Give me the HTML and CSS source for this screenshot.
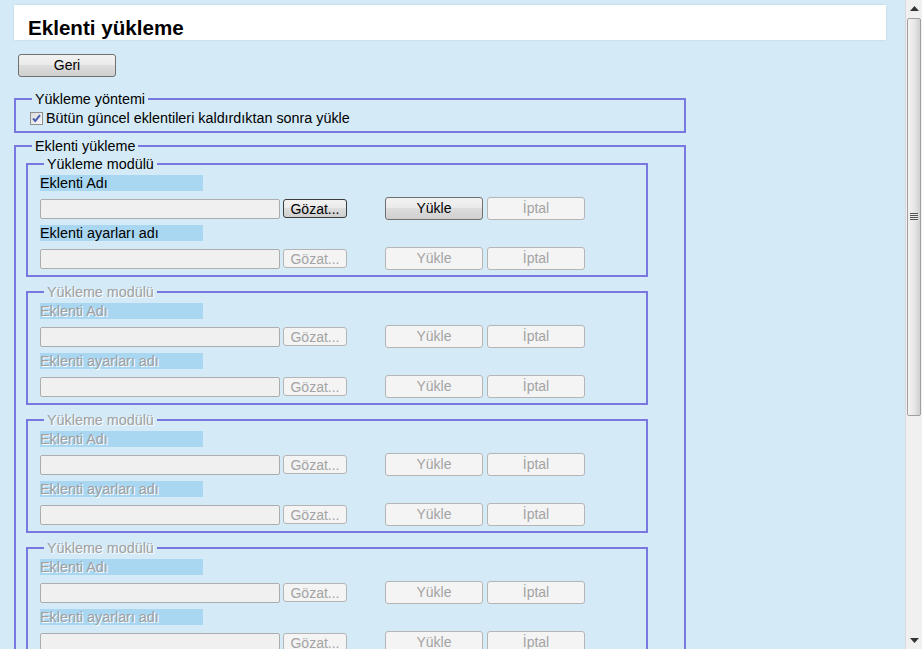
FILE: index.html
```html
<!DOCTYPE html>
<html lang="tr">
<head>
<meta charset="utf-8">
<title>Eklenti yükleme</title>
<link rel="stylesheet" href="styles.css">
</head>
<body>
<div class="window">
  <main class="page">
    <header class="titlebox"><h1 class="title">Eklenti yükleme</h1></header>
    <div class="backrow"><button class="btn btn-wide">Geri</button></div>

    <fieldset class="group">
      <legend class="glegend">Yükleme yöntemi</legend>
      <div class="checkrow">
        <span class="checkbox"><svg width="11" height="11" viewBox="0 0 11 11"><path d="M2 5.5 L4.3 8 L9 2.2" fill="none" stroke="#4a5fae" stroke-width="2"/></svg></span>
        <span class="checklabel">Bütün güncel eklentileri kaldırdıktan sonra yükle</span>
      </div>
    </fieldset>

    <fieldset class="group group-main">
      <legend class="glegend">Eklenti yükleme</legend>

      <fieldset class="module">
        <legend class="mlegend">Yükleme modülü</legend>
        <div class="flabel">Eklenti Adı</div>
        <div class="frow">
          <span class="field"></span>
          <button class="btn btn-browse btn-focus">Gözat...</button>
          <button class="btn btn-wide btn-gap">Yükle</button>
          <button class="btn btn-wide btn-off">İptal</button>
        </div>
        <div class="flabel">Eklenti ayarları adı</div>
        <div class="frow">
          <span class="field"></span>
          <button class="btn btn-browse btn-off">Gözat...</button>
          <button class="btn btn-wide btn-gap btn-off">Yükle</button>
          <button class="btn btn-wide btn-off">İptal</button>
        </div>
      </fieldset>

      <fieldset class="module off">
        <legend class="mlegend">Yükleme modülü</legend>
        <div class="flabel">Eklenti Adı</div>
        <div class="frow">
          <span class="field"></span>
          <button class="btn btn-browse btn-off">Gözat...</button>
          <button class="btn btn-wide btn-gap btn-off">Yükle</button>
          <button class="btn btn-wide btn-off">İptal</button>
        </div>
        <div class="flabel">Eklenti ayarları adı</div>
        <div class="frow">
          <span class="field"></span>
          <button class="btn btn-browse btn-off">Gözat...</button>
          <button class="btn btn-wide btn-gap btn-off">Yükle</button>
          <button class="btn btn-wide btn-off">İptal</button>
        </div>
      </fieldset>

      <fieldset class="module off">
        <legend class="mlegend">Yükleme modülü</legend>
        <div class="flabel">Eklenti Adı</div>
        <div class="frow">
          <span class="field"></span>
          <button class="btn btn-browse btn-off">Gözat...</button>
          <button class="btn btn-wide btn-gap btn-off">Yükle</button>
          <button class="btn btn-wide btn-off">İptal</button>
        </div>
        <div class="flabel">Eklenti ayarları adı</div>
        <div class="frow">
          <span class="field"></span>
          <button class="btn btn-browse btn-off">Gözat...</button>
          <button class="btn btn-wide btn-gap btn-off">Yükle</button>
          <button class="btn btn-wide btn-off">İptal</button>
        </div>
      </fieldset>

      <fieldset class="module off">
        <legend class="mlegend">Yükleme modülü</legend>
        <div class="flabel">Eklenti Adı</div>
        <div class="frow">
          <span class="field"></span>
          <button class="btn btn-browse btn-off">Gözat...</button>
          <button class="btn btn-wide btn-gap btn-off">Yükle</button>
          <button class="btn btn-wide btn-off">İptal</button>
        </div>
        <div class="flabel">Eklenti ayarları adı</div>
        <div class="frow">
          <span class="field"></span>
          <button class="btn btn-browse btn-off">Gözat...</button>
          <button class="btn btn-wide btn-gap btn-off">Yükle</button>
          <button class="btn btn-wide btn-off">İptal</button>
        </div>
      </fieldset>
    </fieldset>
  </main>

  <div class="scrollbar">
    <div class="arrow"><svg width="9" height="5" viewBox="0 0 9 5"><path d="M0 5 L4.5 0 L9 5 Z" fill="#333"/></svg></div>
    <div class="track">
      <div class="thumb"><span class="grip"></span></div>
    </div>
    <div class="arrow"><svg width="9" height="5" viewBox="0 0 9 5"><path d="M0 0 L9 0 L4.5 5 Z" fill="#333"/></svg></div>
  </div>
</div>
</body>
</html>
```

FILE: styles.css
```css
* { box-sizing: border-box; }

html, body {
  margin: 0;
  padding: 0;
  height: 649px;
  overflow: hidden;
}

body {
  background: #d4ebf7;
  font-family: "Liberation Sans", Arial, sans-serif;
  font-size: 14px;
  color: #000;
}

.window {
  display: flex;
  height: 649px;
}

.page {
  flex: 1;
  min-width: 0;
  overflow: hidden;
  padding-top: 5px;
}

.titlebox {
  margin-left: 14px;
  width: 872px;
  height: 35px;
  background: #fff;
  box-shadow: 0 0 2px rgba(0, 0, 0, 0.12);
  padding: 9px 0 0 14px;
}

.title {
  margin: 0;
  font-size: 20.6px;
  line-height: 27px;
  font-weight: bold;
}

.backrow {
  margin: 14px 0 0 18px;
  height: 23px;
}

.btn {
  font-family: "Liberation Sans", Arial, sans-serif;
  font-size: 14px;
  color: #000;
  padding: 0;
  margin: 0;
  border: 1px solid #707070;
  border-radius: 3px;
  background: linear-gradient(#f2f2f2 0%, #ebebeb 45%, #dddddd 50%, #cfcfcf 100%);
  line-height: 19px;
}

.btn-wide { width: 98px; height: 23px; }
.btn-browse { width: 64px; height: 19px; line-height: 16px; }
.btn-focus { border-color: #3c3c3c; }
.btn-gap { margin-left: 38px; }
.btn-off {
  color: #a3a3a3;
  border-color: #b5b5b5;
  background: #f4f4f4;
}

.group {
  margin: 14px 0 0 14px;
  width: 672px;
  border: 2px solid #7878e0;
  padding: 0 0 4px 14px;
}

.group-main {
  margin-top: 5px;
  padding: 0 0 0 10px;
}

.glegend {
  margin-left: 2px;
  padding: 0 3px;
  line-height: 16px;
  font-size: 14.35px;
}

.group-main .glegend { margin-left: 6px; }

.checkrow {
  display: flex;
  align-items: center;
  height: 18px;
  margin-top: 2px;
}

.checkbox {
  width: 13px;
  height: 13px;
  border: 1px solid #8f8f8f;
  background: linear-gradient(135deg, #dcdcdc, #f8f8f8);
  display: flex;
  align-items: center;
  justify-content: center;
  margin-right: 3px;
}

.checklabel {
  font-size: 14.35px;
  line-height: 17px;
}

.module {
  margin: 2px 0 7px 0;
  width: 622px;
  border: 2px solid #7878e0;
  padding: 0 0 5px 12px;
}

.module + .module { margin-top: 3px; }

.mlegend {
  margin-left: 4px;
  padding: 0 3px;
  line-height: 16px;
  font-size: 14.35px;
}

.flabel {
  margin-top: 3px;
  width: 163px;
  height: 16px;
  line-height: 16px;
  background: #a9d6f1;
  font-size: 14.35px;
}

.frow + .flabel { margin-top: 5px; }

.frow {
  display: flex;
  align-items: center;
  height: 23px;
  margin-top: 6px;
}

.field {
  width: 240px;
  height: 20px;
  border: 1px solid #adadad;
  border-radius: 2px;
  background: #f0f0f0;
  margin-right: 3px;
}

.btn-browse + .btn-gap { margin-left: 38px; }
.btn-gap + .btn { margin-left: 4px; }

.off .mlegend,
.off .flabel {
  color: #a0a0a0;
  text-shadow: 1px 1px 0 #ffffff;
}

.scrollbar {
  width: 17px;
  flex: none;
  display: flex;
  flex-direction: column;
  background: #f0f0f0;
  border-left: 1px solid #d9d9d9;
}

.arrow {
  height: 17px;
  display: flex;
  align-items: center;
  justify-content: center;
}

.track {
  flex: 1;
  padding-top: 1px;
}

.thumb {
  height: 398px;
  margin: 0 1px;
  border: 1px solid #a0a0a0;
  border-radius: 2px;
  background: linear-gradient(90deg, #f3f3f3 0%, #e8e8e8 50%, #d0d0d0 100%);
  display: flex;
  align-items: center;
  justify-content: center;
}

.grip {
  width: 8px;
  height: 8px;
  background: repeating-linear-gradient(#555 0 1px, #e8e8e8 1px 2px);
}
```
